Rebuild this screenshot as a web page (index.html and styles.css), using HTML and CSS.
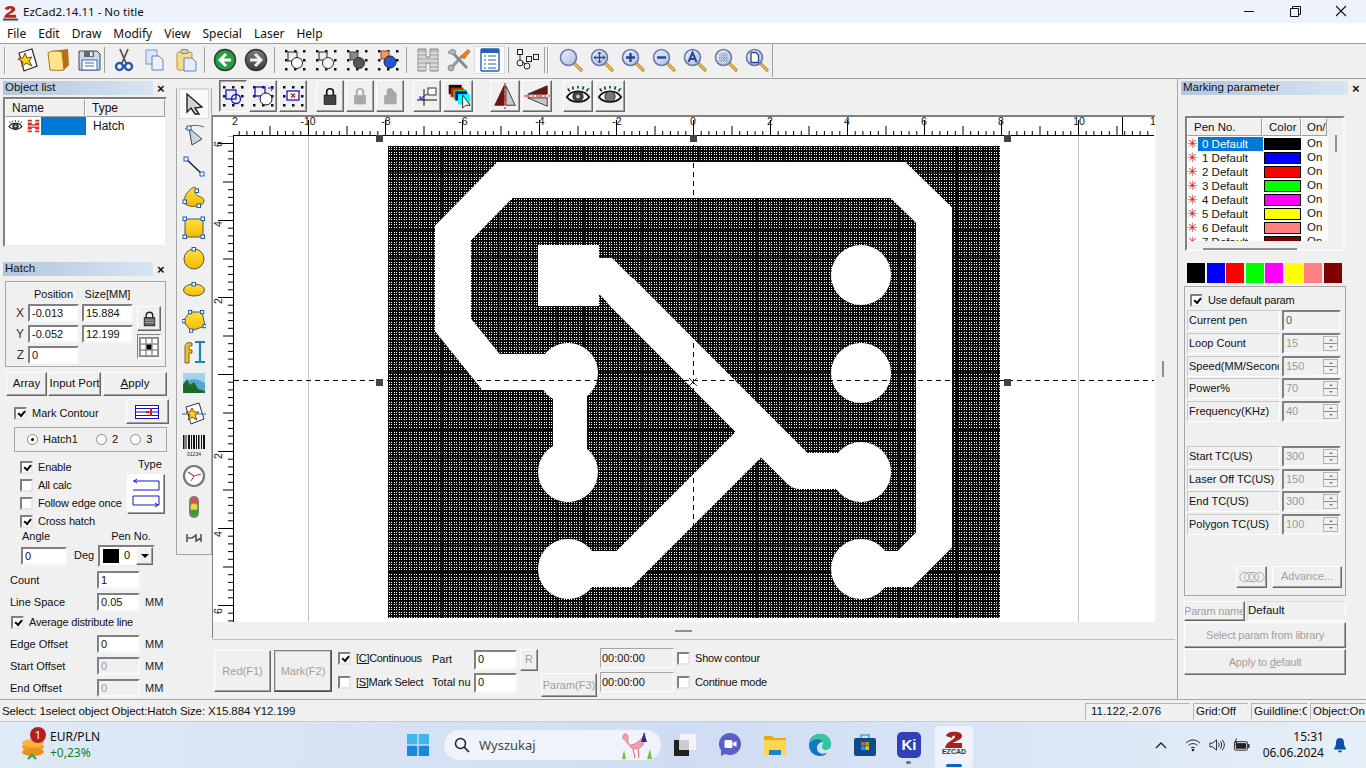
FILE: index.html
```html
<!DOCTYPE html>
<html lang="en">
<head>
<meta charset="utf-8">
<title>EzCad2.14.11 - No title</title>
<link rel="stylesheet" href="styles.css">
</head>
<body>
<svg class="defs" width="0" height="0" aria-hidden="true">
<defs>
<linearGradient id="yel" x1="0" y1="0" x2="0" y2="1"><stop offset="0" stop-color="#ffe23a"/><stop offset="1" stop-color="#f5b800"/></linearGradient>
<linearGradient id="glass" x1="0" y1="0" x2="1" y2="1"><stop offset="0" stop-color="#eef3fb"/><stop offset="1" stop-color="#a9bde0"/></linearGradient>
<linearGradient id="btnbg" x1="0" y1="0" x2="0" y2="1"><stop offset="0" stop-color="#7c7c7c"/><stop offset="1" stop-color="#3c3c3c"/></linearGradient>
<symbol id="mag" viewBox="0 0 24 24"><path d="M14.500 14.500L22 22" stroke="#b98d2a" stroke-width="3.200" stroke-linecap="round"/><path d="M14.500 14.500L22 22" stroke="#f2c85a" stroke-width="1.200" stroke-linecap="round"/><circle cx="9.500" cy="9.500" r="8" fill="url(#glass)" stroke="#6a7aa8" stroke-width="1.600"/></symbol>
<symbol id="dots" viewBox="0 0 24 24"><g fill="#111"><rect x="2" y="2" width="2.500" height="2.500"/><rect x="11" y="2" width="2.500" height="2.500"/><rect x="20" y="2" width="2.500" height="2.500"/><rect x="2" y="11" width="2.500" height="2.500"/><rect x="20" y="11" width="2.500" height="2.500"/><rect x="2" y="20" width="2.500" height="2.500"/><rect x="11" y="20" width="2.500" height="2.500"/><rect x="20" y="20" width="2.500" height="2.500"/></g></symbol>
<symbol id="eye" viewBox="0 0 28 22"><path d="M2 12C7 4 21 4 26 12C21 19 7 19 2 12Z" fill="#fff" stroke="#111" stroke-width="2"/><circle cx="14" cy="11.500" r="5.500" fill="#444" stroke="#111"/><circle cx="14" cy="11.500" r="2" fill="#ccc"/><path d="M5 6L3 3M9 4L8 1M14 3V0M19 4L20 1M23 6L25 3" stroke="#111" stroke-width="1.500"/><path d="M3 3h2M8 1h2M18 1h3M24 3h3" stroke="#3aa" stroke-width="1"/></symbol>
</defs>
</svg>

<header class="titlebar">
  <div class="title-left">
    <svg class="app-ico" viewBox="0 0 18 18"><path d="M3 6C3 2 14 1 14 6C14 9 9 10 7 12H15V15H2C3 10 10 9 10 6C10 5 7 5 7 7Z" fill="#b3271e"/><rect x="1" y="16" width="16" height="2" fill="#444"/></svg>
    <span>EzCad2.14.11 - No title</span>
  </div>
  <div class="winctl">
    <svg width="46" height="23" viewBox="0 0 46 23"><path d="M18 11.500H28" stroke="#111"/></svg>
    <svg width="46" height="23" viewBox="0 0 46 23"><path d="M20.500 8.500V6.500H28.500V14.500H26.500M18.500 8.500H26.500V16.500H18.500Z" fill="none" stroke="#111"/></svg>
    <svg width="46" height="23" viewBox="0 0 46 23"><path d="M18 6L28 16M28 6L18 16" stroke="#111" stroke-width="1.100"/></svg>
  </div>
</header>

<nav class="menubar">
  <span>File</span><span>Edit</span><span>Draw</span><span>Modify</span><span>View</span><span>Special</span><span>Laser</span><span>Help</span>
</nav>

<div class="toolbar">
  <i class="grip"></i>
  <div class="tool t1">
    <svg viewBox="0 0 24 24"><path d="M4 5L17 1L22 18L9 23Z" fill="#fff" stroke="#333" stroke-width="1.300"/><path d="M10 5L12 10L17 9L14 13L17 18L11 15L7 19L8 14L3 11L8 10Z" fill="#ffd21e" stroke="#7a4a00" stroke-width="1"/></svg>
  </div>
  <div class="tool">
    <svg viewBox="0 0 24 24"><path d="M6 3L22 1L23 17L18 22Z" fill="#b86c1c"/><path d="M2 5C6 2 12 3 16 4L18 22C13 23 8 22 4 22Z" fill="#ffe48a" stroke="#a57818"/></svg>
  </div>
  <div class="tool">
    <svg viewBox="0 0 24 24"><path d="M2 3H20L23 6V22H2Z" fill="#cfd8e6" stroke="#445"/><rect x="7" y="3" width="10" height="6" fill="#667"/><rect x="13" y="4" width="2.500" height="4" fill="#eee"/><rect x="5" y="12" width="15" height="10" fill="#fff" stroke="#3468b8"/><path d="M8 15H17M8 18H17" stroke="#3468b8"/></svg>
  </div>
  <i class="sep s1"></i>
  <div class="tool">
    <svg viewBox="0 0 24 24"><path d="M8 1L14 15M16 1L10 15" stroke="#555" stroke-width="1.800"/><circle cx="7.500" cy="18.500" r="3.500" fill="#fff" stroke="#2558b0" stroke-width="2.400"/><circle cx="16.500" cy="18.500" r="3.500" fill="#fff" stroke="#2558b0" stroke-width="2.400"/></svg>
  </div>
  <div class="tool">
    <svg viewBox="0 0 24 24"><rect x="3" y="2" width="11" height="14" fill="#dbe6f6" stroke="#7d9ccb"/><path d="M9 8H16L20 12V22H9Z" fill="#eaf1fb" stroke="#5e84bd"/></svg>
  </div>
  <div class="tool">
    <svg viewBox="0 0 24 24"><rect x="3" y="4" width="15" height="18" rx="2" fill="#f6dc8a" stroke="#b8973c"/><rect x="7" y="1.500" width="7" height="4" rx="1" fill="#ccc" stroke="#888"/><path d="M10 10H18L22 14V23H10Z" fill="#e5eefa" stroke="#5e84bd"/></svg>
  </div>
  <i class="sep s2"></i>
  <div class="tool t2">
    <svg viewBox="0 0 24 24"><circle cx="12" cy="12" r="10.500" fill="#23a03e" stroke="#333" stroke-width="1.400"/><path d="M13 6L7 12L13 18M7.500 12H18" fill="none" stroke="#fff" stroke-width="3"/></svg>
  </div>
  <div class="tool">
    <svg viewBox="0 0 24 24"><circle cx="12" cy="12" r="10.500" fill="url(#btnbg)" stroke="#333" stroke-width="1.400"/><path d="M11 6L17 12L11 18M16.500 12H6" fill="none" stroke="#eee" stroke-width="3"/></svg>
  </div>
  <i class="sep s3"></i>
  <div class="tool"><svg viewBox="0 0 24 24"><use href="#dots"/><rect x="5" y="4" width="9" height="9" fill="none" stroke="#222"/><circle cx="14" cy="15" r="5.500" fill="#fff" stroke="#222"/></svg></div>
  <div class="tool"><svg viewBox="0 0 24 24"><use href="#dots"/><rect x="5" y="4" width="8" height="8" fill="#eee" stroke="#222"/><circle cx="14" cy="15" r="5.500" fill="#f4f4f4" stroke="#333"/></svg></div>
  <div class="tool"><svg viewBox="0 0 24 24"><use href="#dots"/><rect x="5" y="4" width="8" height="8" fill="#888" stroke="#444"/><circle cx="14" cy="15" r="5.500" fill="#555" stroke="#333"/></svg></div>
  <div class="tool"><svg viewBox="0 0 24 24"><use href="#dots"/><rect x="5" y="3" width="8" height="8" fill="#f09a5a" stroke="#a33"/><circle cx="14" cy="14" r="6" fill="#2457cf" stroke="#123"/></svg></div>
  <i class="sep s4"></i>
  <div class="tool"><svg viewBox="0 0 24 24"><path d="M2 1H10V9H14V1H22V23H14V15H10V23H2Z" fill="#bdbdbd" stroke="#8a8a8a"/><path d="M2 5H10M2 9H10M2 13H22M2 17H10M14 17H22M14 5H22M14 9H22M2 21H10M14 21H22" stroke="#efefef"/></svg></div>
  <div class="tool"><svg viewBox="0 0 24 24"><path d="M5 19L15 8" stroke="#9a9a9a" stroke-width="3.200"/><path d="M6 5L20 20" stroke="#8a8a8a" stroke-width="3"/><path d="M1 5C2 1 8 0 9 4L7 7L3 5.500Z" fill="#b4b4b4" stroke="#666" stroke-width=".6"/><circle cx="4" cy="20" r="3" fill="#b4b4b4" stroke="#666" stroke-width=".6"/><path d="M14 8L21 1.500L23 3.500L17 11Z" fill="#f08020" stroke="#b05010" stroke-width=".7"/></svg></div>
  <div class="tool pressed"><svg viewBox="0 0 24 24"><rect x="3" y="1" width="18" height="22" rx="1" fill="#fff" stroke="#2660b8" stroke-width="1.400"/><rect x="3" y="1" width="18" height="4" fill="#2660b8"/><path d="M6 8H8M10 8H18M6 12H8M10 12H18M6 16H8M10 16H18M6 20H8M10 20H18" stroke="#2660b8" stroke-width="1.200"/></svg></div>
  <i class="sep s5"></i>
  <div class="tool"><svg viewBox="0 0 24 24"><g fill="none" stroke="#222"><rect x="1.500" y="1.500" width="5" height="5"/><rect x="10.500" y="8.500" width="5" height="5"/><rect x="17.500" y="6.500" width="5" height="5"/><circle cx="4" cy="15" r="3"/><circle cx="11" cy="18" r="3"/><path d="M4 7V12M6 14L10 16"/></g></svg></div>
  <i class="sep s6"></i><i class="grip g2"></i>
  <div class="tool z"><svg viewBox="0 0 24 24"><use href="#mag"/></svg></div>
  <div class="tool z"><svg viewBox="0 0 24 24"><use href="#mag"/><path d="M9.500 4V15M4 9.500H15" stroke="#24459a" stroke-width="1.300"/><path d="M7.500 6L9.500 4L11.500 6M7.500 13L9.500 15L11.500 13M6 7.500L4 9.500L6 11.500M13 7.500L15 9.500L13 11.500" fill="none" stroke="#24459a"/></svg></div>
  <div class="tool z"><svg viewBox="0 0 24 24"><use href="#mag"/><path d="M9.500 5V14M5 9.500H14" stroke="#24459a" stroke-width="2.400"/></svg></div>
  <div class="tool z"><svg viewBox="0 0 24 24"><use href="#mag"/><path d="M5 9.500H14" stroke="#24459a" stroke-width="2.400"/></svg></div>
  <div class="tool z"><svg viewBox="0 0 24 24"><use href="#mag"/><path d="M5.500 14L9.500 4.500L13.500 14M7 11H12" fill="none" stroke="#24459a" stroke-width="2"/></svg></div>
  <div class="tool z"><svg viewBox="0 0 24 24"><use href="#mag"/><path d="M5 7H14M5 9.500H14M5 12H14M7 5V14M9.500 5V14M12 5V14" stroke="#6d7fb0" stroke-dasharray="1 1.500"/></svg></div>
  <div class="tool z"><svg viewBox="0 0 24 24"><use href="#mag"/><path d="M6 4.500H11L13.500 7V14.500H6Z" fill="#fff" stroke="#24459a" stroke-width="1.300"/></svg></div>
  <i class="sep s7"></i>
</div>

<main class="main">
  <aside class="left">
    <div class="capline"><div class="cap">Object list</div><b class="x">×</b></div>
    <div class="objlist">
      <div class="obj-head"><span class="oh1">Name</span><span class="oh2">Type</span></div>
      <div class="obj-row">
        <svg class="r-eye" viewBox="0 0 28 22"><use href="#eye"/></svg>
        <svg class="r-h" viewBox="0 0 13 14"><rect width="13" height="14" fill="#fff"/><path d="M1 1H4.500V5.500H8.500V1H12V13H8.500V8.500H4.500V13H1Z" fill="#e03030" stroke="#a02020" stroke-width=".5"/><path d="M0 3H5M8 3H13M0 7H13M0 11H5M8 11H13" stroke="#fff"/></svg>
        <span class="r-sel"></span><span class="r-type">Hatch</span>
      </div>
    </div>

    <div class="capline hatchcap"><div class="cap">Hatch</div><b class="x">×</b></div>
    <div class="posbox">
      <span class="lb-pos">Position</span><span class="lb-size">Size[MM]</span>
      <span class="axis">X</span><div class="in">-0.013</div><div class="in">15.884</div>
      <div class="lockcol">
        <div class="bt lockbtn"><svg viewBox="0 0 16 20"><path d="M4 9V6C4 1 12 1 12 6V9" fill="none" stroke="#222" stroke-width="1.700"/><rect x="1.500" y="9" width="13" height="10" fill="#666" stroke="#111"/><path d="M2 12H14M2 15H14" stroke="#aaa"/></svg></div>
        <div class="bt gridbtn"><svg viewBox="0 0 22 22"><rect width="22" height="22" fill="#888"/><g fill="#fff"><rect x="2" y="2" width="5" height="5"/><rect x="8.500" y="2" width="5" height="5"/><rect x="15" y="2" width="5" height="5"/><rect x="2" y="8.500" width="5" height="5"/><rect x="15" y="8.500" width="5" height="5"/><rect x="2" y="15" width="5" height="5"/><rect x="8.500" y="15" width="5" height="5"/><rect x="15" y="15" width="5" height="5"/></g><rect x="8.500" y="8.500" width="5" height="5" fill="#000"/></svg></div>
      </div>
      <span class="axis">Y</span><div class="in">-0.052</div><div class="in">12.199</div>
      <span class="axis">Z</span><div class="in">0</div>
    </div>

    <div class="btnrow">
      <div class="bt b-array">Array</div><div class="bt b-port">Input Port</div><div class="bt b-apply"><span><u>A</u>pply</span></div>
    </div>

    <div class="contour">
      <span class="ck on"></span><span class="cl">Mark Contour</span>
      <div class="bt b-ct"><svg viewBox="0 0 24 14"><rect x=".5" y=".5" width="23" height="13" fill="#fff" stroke="#1212c8"/><path d="M0 3.500H24M0 7H24M0 10.500H24" stroke="#1212c8"/><path d="M11 7H14M16 3V11" stroke="#e01010" stroke-width="2"/></svg></div>
    </div>

    <div class="radios">
      <span class="rd on"></span><span class="rl rl1">Hatch1</span>
      <span class="rd"></span><span class="rl rl2">2</span>
      <span class="rd"></span><span class="rl">3</span>
    </div>

    <div class="hatchopts">
      <div class="optcol">
        <div class="chkrow"><span class="ck on"></span><span>Enable</span></div>
        <div class="chkrow"><span class="ck"></span><span>All calc</span></div>
        <div class="chkrow"><span class="ck"></span><span>Follow edge once</span></div>
        <div class="chkrow"><span class="ck on"></span><span>Cross hatch</span></div>
      </div>
      <div class="typecol">
        <span class="typel">Type</span>
        <div class="bt b-type"><svg viewBox="0 0 30 34"><path d="M2 4H28V13H2M2 19H28V28H2V19" fill="none" stroke="#1414d0"/><path d="M6 2L3 4L6 6M24 26L27 28L24 30" fill="none" stroke="#1414d0"/></svg></div>
      </div>
    </div>

    <div class="anglelabels"><span>Angle</span><span>Pen No.</span></div>
    <div class="anglerow">
      <div class="in in-angle">0</div><span class="deg">Deg</span>
      <div class="combo"><i class="pensw"></i><span>0</span><div class="bt ddarrow"><svg viewBox="0 0 8 4"><path d="M0 0H8L4 4Z"/></svg></div></div>
    </div>
    <div class="fr"><span class="fl">Count</span><div class="in in-f">1</div></div>
    <div class="fr"><span class="fl">Line Space</span><div class="in in-f">0.05</div><span class="mm">MM</span></div>
    <div class="avg"><span class="ck on"></span><span>Average distribute line</span></div>
    <div class="fr"><span class="fl">Edge Offset</span><div class="in in-f">0</div><span class="mm">MM</span></div>
    <div class="fr"><span class="fl">Start Offset</span><div class="in in-f dis">0</div><span class="mm">MM</span></div>
    <div class="fr"><span class="fl">End Offset</span><div class="in in-f dis">0</div><span class="mm">MM</span></div>
  </aside>

  <div class="vtool">
    <div class="vt active"><svg viewBox="0 0 24 24"><path d="M5 2L20 15L13 16L17 22H13L9 16L5 20Z" fill="#cfd4dc" stroke="#222" stroke-width="1.400"/></svg></div>
    <div class="vt"><svg viewBox="0 0 24 24"><path d="M3 6C8 1 16 2 22 4" fill="none" stroke="#666"/><path d="M7 5L20 16L10 22Z" fill="#cdd2e0" stroke="#444"/><rect x="5" y="3" width="4" height="4" fill="#fff" stroke="#1e5ac8"/></svg></div>
    <div class="vt"><svg viewBox="0 0 24 24"><path d="M4 5L20 20" stroke="#111" stroke-width="1.300"/><rect x="2" y="3" width="4" height="4" fill="#fff" stroke="#1e5ac8"/><rect x="18" y="18" width="4" height="4" fill="#fff" stroke="#1e5ac8"/></svg></div>
    <div class="vt"><svg viewBox="0 0 24 24"><path d="M12 2C4 6 0 16 3 19C8 23 22 22 22 16C22 11 15 12 14 9C13 6 16 3 12 2Z" fill="url(#yel)" stroke="#7a5a20"/><rect x="13" y="4" width="3.500" height="3.500" fill="#fff" stroke="#1e5ac8"/><rect x="1" y="15" width="3.500" height="3.500" fill="#fff" stroke="#1e5ac8"/><rect x="15" y="19" width="3.500" height="3.500" fill="#fff" stroke="#1e5ac8"/></svg></div>
    <div class="vt"><svg viewBox="0 0 24 24"><rect x="3" y="3" width="18" height="18" fill="url(#yel)" stroke="#555"/><g fill="#fff" stroke="#1e5ac8"><rect x="1" y="1" width="3.500" height="3.500"/><rect x="19" y="1" width="3.500" height="3.500"/><rect x="1" y="19" width="3.500" height="3.500"/><rect x="19" y="19" width="3.500" height="3.500"/></g></svg></div>
    <div class="vt"><svg viewBox="0 0 24 24"><circle cx="12" cy="12" r="10" fill="url(#yel)" stroke="#555"/><rect x="10" y="0.500" width="3.500" height="3.500" fill="#fff" stroke="#1e5ac8"/></svg></div>
    <div class="vt"><svg viewBox="0 0 24 24"><ellipse cx="12" cy="12" rx="10.500" ry="6" fill="url(#yel)" stroke="#555"/><rect x="10" y="4.500" width="3.500" height="3.500" fill="#fff" stroke="#1e5ac8"/></svg></div>
    <div class="vt"><svg viewBox="0 0 24 24"><path d="M8 3L20 3L23 17L9 22L1 12Z" fill="url(#yel)" stroke="#555"/><g fill="#fff" stroke="#1e5ac8"><rect x="6.500" y="1.500" width="3.200" height="3.200"/><rect x="18.500" y="1.500" width="3.200" height="3.200"/><rect x="21" y="15.500" width="3.200" height="3.200"/><rect x="7.500" y="20" width="3.200" height="3.200"/><rect x="0" y="10.500" width="3.200" height="3.200"/></g></svg></div>
    <div class="vt"><svg viewBox="0 0 24 24"><path d="M3 23V7C3 3 6 2 10 3V6C8 5.500 7 6 7 8V10H10V13H7V23Z" fill="#f3c020" stroke="#333" stroke-width=".7"/><path d="M13 2H23M18 2V22M13 22H23" fill="none" stroke="#1c86b8" stroke-width="2.200"/></svg></div>
    <div class="vt"><svg viewBox="0 0 24 24"><rect x="1" y="2" width="22" height="20" fill="#9fd6ee"/><path d="M1 12C8 6 16 8 23 12V22H1Z" fill="#58a6d0"/><path d="M1 22V14L5 8L8 14L12 11L16 18L23 20V22Z" fill="#1f6a28"/></svg></div>
    <div class="vt"><svg viewBox="0 0 24 24"><path d="M4 5L17 1L22 17L9 22Z" fill="#fff" stroke="#333"/><path d="M0 12H24" stroke="#1e5ac8"/><path d="M10 6L12 10L17 10L13 13L15 18L10 15L6 18L8 13L4 10L8 10Z" fill="#ffd21e" stroke="#7a4a00"/></svg></div>
    <div class="vt"><svg viewBox="0 0 24 24"><g fill="#111"><rect x="1" y="2" width="1.500" height="14"/><rect x="3.500" y="2" width="1" height="14"/><rect x="6" y="2" width="2" height="14"/><rect x="9" y="2" width="1" height="14"/><rect x="11" y="2" width="2" height="14"/><rect x="14" y="2" width="1" height="14"/><rect x="16" y="2" width="1.500" height="14"/><rect x="19" y="2" width="1" height="14"/><rect x="21" y="2" width="2" height="14"/></g><text x="12" y="23" class="bcode">01234</text></svg></div>
    <div class="vt"><svg viewBox="0 0 24 24"><circle cx="12" cy="12" r="10" fill="#fff" stroke="#777" stroke-width="2.200"/><path d="M12 12L6 8M12 12L19 10M12 12L9 17" stroke="#c33"/><path d="M12 12L6 8" stroke="#555"/></svg></div>
    <div class="vt"><svg viewBox="0 0 24 24"><rect x="7" y="1" width="10" height="22" rx="5" fill="#6a8a6a"/><circle cx="12" cy="6" r="3.500" fill="#d8505a"/><circle cx="12" cy="12" r="3.500" fill="#e8d840"/><circle cx="12" cy="18" r="3.500" fill="#3e9a3e"/></svg></div>
    <div class="vt"><svg viewBox="0 0 24 24"><path d="M5 8V16M19 8V16M5 12H10L14 9V15L19 12" fill="none" stroke="#555" stroke-width="1.600"/></svg></div>
  </div>

  <section class="center">
    <div class="tb2">
      <div class="bt b2 pressed2"><svg viewBox="0 0 24 24"><use href="#dots"/><rect x="5" y="6" width="10" height="9" fill="none" stroke="#1414d0" stroke-width="1.300"/><circle cx="15" cy="15" r="4.500" fill="none" stroke="#1414d0" stroke-width="1.300"/></svg></div>
      <div class="bt b2"><svg viewBox="0 0 24 24"><use href="#dots"/><rect x="4" y="3" width="10" height="9" fill="none" stroke="#1414d0" stroke-width="1.300"/><circle cx="15" cy="15" r="6" fill="#fff" stroke="#111"/><path d="M17 4H22L20 7" fill="none" stroke="#1414d0"/></svg></div>
      <div class="bt b2"><svg viewBox="0 0 24 24"><use href="#dots"/><rect x="6" y="7" width="12" height="9" fill="#fff" stroke="#1414d0" stroke-width="1.300"/><path d="M10 9.500L14 13.500M14 9.500L10 13.500" stroke="#e01010" stroke-width="1.200"/></svg></div>
      <i class="b2gap g7"></i>
      <div class="bt b2"><svg class="lk" viewBox="0 0 24 24"><path d="M8 12V7C8 2 16 2 16 7V12" fill="none" stroke="#111" stroke-width="2"/><rect x="5" y="11" width="14" height="11" fill="#444" stroke="#111"/></svg></div>
      <div class="bt b2"><svg class="lk" viewBox="0 0 24 24"><path d="M8 12V7C8 2 16 2 16 7V12" fill="none" stroke="#a8a8a8" stroke-width="2"/><rect x="5" y="11" width="14" height="11" fill="#a8a8a8"/></svg></div>
      <div class="bt b2"><svg class="lk" viewBox="0 0 24 24"><path d="M8 11V7C8 2 14 1 16 5L20 9V22H5V11Z" fill="#a8a8a8"/></svg></div>
      <i class="b2gap g7"></i>
      <div class="bt b2"><svg viewBox="0 0 24 24"><rect x="13" y="4" width="8" height="7" fill="#fff" stroke="#333"/><path d="M2 16H22M9 5V22" stroke="#111"/><path d="M12 10L5 15M5 12V15H9" fill="none" stroke="#1414d0"/></svg></div>
      <div class="bt b2 w30"><svg viewBox="0 0 28 28"><rect x="4" y="2" width="14" height="10" fill="#111"/><rect x="6" y="5" width="14" height="10" fill="#e01010"/><rect x="9" y="7" width="14" height="10" fill="#10d020"/><rect x="11" y="9" width="13" height="10" fill="#1010c0"/><rect x="14" y="12" width="13" height="11" fill="#00ffff"/><path d="M19 13V27L22 24H27Z" fill="#fff" stroke="#222"/></svg></div>
      <i class="b2gap g15"></i>
      <div class="bt b2 w30"><svg viewBox="0 0 28 28"><path d="M13 3L3 24H13Z" fill="#7a0d0d" stroke="#333"/><path d="M15 3L25 24H15Z" fill="#c8c8c8" stroke="#333"/><path d="M14 0V28" stroke="#e01010" stroke-width="1.300" stroke-dasharray="7 2 2 2"/></svg></div>
      <div class="bt b2 w30"><svg viewBox="0 0 28 28"><path d="M25 3L4 12H25Z" fill="#7a0d0d" stroke="#333"/><path d="M25 25L4 16H25Z" fill="#c8c8c8" stroke="#333"/><path d="M0 14H28" stroke="#e01010" stroke-width="1.300" stroke-dasharray="7 2 2 2"/></svg></div>
      <i class="b2gap g9"></i>
      <div class="bt b2 w30"><svg viewBox="0 0 28 22"><use href="#eye"/></svg></div>
      <div class="bt b2 w30"><svg viewBox="0 0 28 22"><use href="#eye"/><circle cx="14" cy="11.500" r="5" fill="#777"/></svg></div>
    </div>

    <div class="canvas">
      <svg class="draw" viewBox="212 115 943 507" width="943" height="507">
        <defs>
          <pattern id="hdots" width="5" height="5" patternUnits="userSpaceOnUse" x="388" y="146">
            <rect width="5" height="5" fill="#0c0c0c"/>
            <g fill="#fff"><rect x="1" y="1" width="1" height="1"/><rect x="3" y="1" width="1" height="1"/><rect x="1" y="3" width="1" height="1"/><rect x="3" y="3" width="1" height="1"/></g>
          </pattern>
          <pattern id="hbars" width="28.600" height="28.600" patternUnits="userSpaceOnUse" x="384" y="143">
            <path d="M0 0H29M0 0V29" stroke="#000" stroke-width="2"/>
          </pattern>
          <pattern id="rtop" width="77" height="20" patternUnits="userSpaceOnUse" x="231" y="116">
            <path d="M.5 4V20M8.200 15V20M15.900 15V20M23.600 15V20M31.300 15V20M39 10V20M46.700 15V20M54.400 15V20M62.100 15V20M69.800 15V20" stroke="#000" stroke-width="1" fill="none"/>
          </pattern>
          <pattern id="rleft" width="21" height="77" patternUnits="userSpaceOnUse" x="212" y="143">
            <path d="M6 .5H21M16 8.200H21M16 15.900H21M16 23.600H21M16 31.300H21M11 39H21M16 46.700H21M16 54.400H21M16 62.100H21M16 69.800H21" stroke="#000" stroke-width="1" fill="none"/>
          </pattern>
        </defs>
        <rect x="212" y="115" width="943" height="507" fill="#fff"/>
        <path d="M308.500 136V622M1078.500 136V622" stroke="#c4c4c4"/>
        <rect x="233" y="116" width="922" height="20" fill="url(#rtop)"/>
        <rect x="212" y="136" width="21" height="486" fill="url(#rleft)"/>
        <path d="M233 135.500H1154M233.500 135V622" stroke="#000" shape-rendering="crispEdges"/>
        <path d="M1122.500 116V135" stroke="#000"/>
        <g class="rt">
          <text x="235" y="125">2</text><text x="308" y="125">-10</text><text x="386" y="125">-8</text><text x="463" y="125">-6</text><text x="540" y="125">-4</text><text x="617" y="125">-2</text><text x="693" y="125">0</text><text x="770" y="125">2</text><text x="847" y="125">4</text><text x="924" y="125">6</text><text x="1001" y="125">8</text><text x="1079" y="125">10</text><text x="1153" y="125">1</text>
        </g>
        <g class="rt">
          <text transform="translate(222 144) rotate(-90)">6</text><text transform="translate(222 224) rotate(-90)">4</text><text transform="translate(222 301) rotate(-90)">2</text><text transform="translate(222 456) rotate(-90)">2</text><text transform="translate(222 534) rotate(-90)">4</text><text transform="translate(222 611) rotate(-90)">6</text>
        </g>

        <rect x="388" y="146" width="612" height="472" fill="url(#hdots)" shape-rendering="crispEdges"/>
        <rect x="388" y="146" width="612" height="472" fill="url(#hbars)"/>

        <g fill="none" stroke="#fff" stroke-width="36" stroke-linejoin="miter">
          <path d="M861 569H905L934 540V215L898 180H505L453 233V325L491 372H568"/>
          <path d="M570 373V472" stroke-width="34"/>
          <path d="M620 290.500L800 471H861" stroke-linejoin="round"/>
          <path d="M568 569H624L760 433"/>
        </g>
        <g fill="#fff">
          <circle cx="568" cy="373" r="30"/><circle cx="568" cy="472" r="30"/><circle cx="568" cy="569" r="30"/>
          <circle cx="861" cy="275" r="30"/><circle cx="861" cy="373" r="30"/><circle cx="861" cy="472" r="30"/><circle cx="861" cy="569" r="30"/>
          <rect x="538" y="245" width="61" height="61"/>
          <path d="M599 258H612L640 286V335L599 294Z"/>
        </g>

        <path d="M234 380.500H1154M693.500 136V622" stroke="#000" stroke-dasharray="5 4" shape-rendering="crispEdges"/>
        <g fill="#444">
          <rect x="376" y="135" width="7" height="7"/><rect x="690" y="135" width="7" height="7"/><rect x="1004" y="135" width="7" height="7"/>
          <rect x="376" y="379" width="7" height="7"/><rect x="1004" y="379" width="7" height="7"/>
        </g>
        <path d="M689 378L697 386M697 378L689 386" stroke="#333"/>
      </svg>
      <div class="vhandle"></div>
    </div>
    <div class="hstrip"><div class="hhandle"></div></div>

    <div class="controls">
      <div class="bt c-red dis-t">Red(F1)</div>
      <div class="bt c-mark dis-t">Mark(F2)</div>
      <div class="c-checks">
        <div class="chkrow"><span class="ck on"></span><span><u>[C]</u>Continuous</span></div>
        <div class="chkrow"><span class="ck"></span><span><u>[S]</u>Mark Select</span></div>
      </div>
      <div class="c-part">
        <div class="prow"><span class="pl">Part</span><div class="in in-p">0</div><div class="bt b-r dis-t">R</div></div>
        <div class="prow"><span class="pl">Total nu</span><div class="in in-p">0</div></div>
      </div>
      <div class="bt b-param dis-t">Param(F3)</div>
      <div class="c-times"><div class="timebox">00:00:00</div><div class="timebox">00:00:00</div></div>
      <div class="c-checks c2">
        <div class="chkrow"><span class="ck"></span><span>Show contour</span></div>
        <div class="chkrow"><span class="ck"></span><span>Continue mode</span></div>
      </div>
    </div>
  </section>

  <aside class="right">
    <div class="capline"><div class="cap capr">Marking parameter</div><b class="x">×</b></div>
    <div class="penlist">
      <div class="pen-head"><span class="ph1">Pen No.</span><span class="ph2">Color</span><span class="ph3">On/</span></div>
      <div class="pen-rows">
        <div class="pen"><i class="star">✳</i><span class="pn sel">0 Default</span><i class="sw"></i><span>On</span></div>
        <div class="pen"><i class="star">✳</i><span class="pn">1 Default</span><i class="sw s-blue"></i><span>On</span></div>
        <div class="pen"><i class="star">✳</i><span class="pn">2 Default</span><i class="sw s-red"></i><span>On</span></div>
        <div class="pen"><i class="star">✳</i><span class="pn">3 Default</span><i class="sw s-green"></i><span>On</span></div>
        <div class="pen"><i class="star">✳</i><span class="pn">4 Default</span><i class="sw s-mag"></i><span>On</span></div>
        <div class="pen"><i class="star">✳</i><span class="pn">5 Default</span><i class="sw s-yel"></i><span>On</span></div>
        <div class="pen"><i class="star">✳</i><span class="pn">6 Default</span><i class="sw s-sal"></i><span>On</span></div>
        <div class="pen"><i class="star">✳</i><span class="pn">7 Default</span><i class="sw s-mar"></i><span>On</span></div>
      </div>
      <i class="vthumb"></i>
      <i class="hthumb"></i>
    </div>
    <div class="palette"><i></i><i class="s-blue"></i><i class="s-red"></i><i class="s-green"></i><i class="s-mag"></i><i class="s-yel"></i><i class="s-sal"></i><i class="s-mar"></i></div>
    <div class="parambox">
      <div class="usedef"><span class="ck on"></span><span>Use default param</span></div>
      <div class="pr"><span class="plab">Current pen</span><div class="in pv">0</div></div>
      <div class="pr"><span class="plab">Loop Count</span><div class="in pv">15<i class="spin"></i></div></div>
      <div class="pr"><span class="plab">Speed(MM/Second)</span><div class="in pv">150<i class="spin"></i></div></div>
      <div class="pr"><span class="plab">Power%</span><div class="in pv">70<i class="spin"></i></div></div>
      <div class="pr"><span class="plab">Frequency(KHz)</span><div class="in pv">40<i class="spin"></i></div></div>
      <div class="prgap"></div>
      <div class="pr"><span class="plab">Start TC(US)</span><div class="in pv">300<i class="spin"></i></div></div>
      <div class="pr"><span class="plab">Laser Off TC(US)</span><div class="in pv">150<i class="spin"></i></div></div>
      <div class="pr"><span class="plab">End TC(US)</span><div class="in pv">300<i class="spin"></i></div></div>
      <div class="pr"><span class="plab">Polygon TC(US)</span><div class="in pv">100<i class="spin"></i></div></div>
      <div class="advrow">
        <div class="bt b-rings"><svg viewBox="0 0 30 12"><g fill="none" stroke="#a8a8a8"><circle cx="7" cy="6" r="5"/><circle cx="12" cy="6" r="5"/><circle cx="17" cy="6" r="5"/><circle cx="23" cy="6" r="5"/></g></svg></div>
        <div class="bt b-adv dis-t">Advance...</div>
      </div>
    </div>
    <div class="namerow"><div class="bt b-name dis-t">Param name</div><div class="nameval">Default</div></div>
    <div class="bt b-wide dis-t">Select param from library</div>
    <div class="bt b-wide dis-t"><span>Apply to <u>d</u>efault</span></div>
  </aside>
</main>

<footer class="status">
  <span class="st-msg">Select: 1select object Object:Hatch Size: X15.884 Y12.199</span>
  <span class="st st1">11.122,-2.076</span>
  <span class="st st2">Grid:Off</span>
  <span class="st st3">Guildline:On</span>
  <span class="st st4">Object:On</span>
</footer>

<div class="taskbar">
  <div class="tb-widget">
    <div class="coin">
      <svg viewBox="0 0 30 30" width="30" height="30"><ellipse cx="14" cy="17" rx="11" ry="4" fill="#f0a02a"/><ellipse cx="14" cy="13" rx="11" ry="4" fill="#f7b53c"/><ellipse cx="14" cy="22" rx="11" ry="4" fill="#e8901e"/><path d="M9 29L13 25L17 29" fill="none" stroke="#3fa23f" stroke-width="2.400"/></svg>
      <span class="badge">1</span>
    </div>
    <div class="wtext"><span>EUR/PLN</span><span class="wgreen">+0,23%</span></div>
  </div>
  <div class="tb-center">
    <svg class="ti-win" viewBox="0 0 22 22"><rect width="10.300" height="10.300" fill="#40b5ee"/><rect x="11.700" width="10.300" height="10.300" fill="#40b5ee"/><rect y="11.700" width="10.300" height="10.300" fill="#1a87dc"/><rect x="11.700" y="11.700" width="10.300" height="10.300" fill="#1a87dc"/></svg>
    <div class="searchbox">
      <svg viewBox="0 0 16 16" width="16" height="16"><circle cx="6.500" cy="6.500" r="5" fill="none" stroke="#222" stroke-width="1.500"/><path d="M10 10L15 15" stroke="#222" stroke-width="1.700"/></svg>
      <span>Wyszukaj</span>
      <svg class="flamingo" viewBox="0 0 34 30" width="38" height="30"><path d="M4 9C3 3 8 2 9 7C9 11 8 14 12 15C17 14 22 11 26 3L24 15C21 19 15 20 11 17" fill="#ef9fae" stroke="#d66" stroke-width=".7"/><path d="M25 2L28 12L22 12Z" fill="#352a86"/><path d="M14 19L16 28M19 18L20 28" stroke="#d66" stroke-width="1"/><path d="M3 29L5 20L7 29M28 29L31 19L33 29" fill="#7cbf48"/></svg>
    </div>
    <svg class="ti" viewBox="0 0 24 24"><rect x="7" y="1" width="16" height="16" fill="#f4f4f4"/><rect x="6" y="7" width="10" height="10" fill="#ccc"/><path d="M1 7H6V17H16V23H1Z" fill="#222"/></svg>
    <svg class="ti" viewBox="0 0 24 24"><circle cx="12" cy="11" r="11" fill="#5a5fc8"/><path d="M3 17L3 23L9 20Z" fill="#5a5fc8"/><rect x="6.500" y="7" width="8" height="8" rx="1.500" fill="#fff"/><path d="M15 10L18.500 8V14L15 12Z" fill="#fff"/></svg>
    <svg class="ti" viewBox="0 0 24 24"><path d="M1 3H9L11 5H23V22H1Z" fill="#e8a91f"/><rect x="1" y="7" width="22" height="15" fill="#ffd64f"/><rect x="6" y="17" width="12" height="5" fill="#1a86d0"/></svg>
    <svg class="ti" viewBox="0 0 24 24"><path d="M23 13C23 5 18 1 12 1C5 1 1 6 1 12C1 19 6 23 12 23C15 23 18 22 19 20C14 22 9 20 9 15C9 11 13 8 17 9C21 10 23 13 23 13Z" fill="#1477c2"/><path d="M1 11C3 3 10 0 15 1C20 2 24 7 23 13C22 18 14 18 14 14C14 11 16 10 14 8C11 5 4 6 1 11Z" fill="#33c6a0"/></svg>
    <svg class="ti" viewBox="0 0 24 24"><path d="M8 6V2H16V6" fill="none" stroke="#40a8ea" stroke-width="1.600"/><rect x="1" y="5" width="22" height="18" rx="2" fill="#0f4a8c"/><rect x="8" y="9" width="3.700" height="3.700" fill="#f25022"/><rect x="12.300" y="9" width="3.700" height="3.700" fill="#7fba00"/><rect x="8" y="13.300" width="3.700" height="3.700" fill="#00a4ef"/><rect x="12.300" y="13.300" width="3.700" height="3.700" fill="#ffb900"/></svg>
    <div class="ti-ki"><span>Ki</span><i class="dot"></i></div>
    <div class="ti-ez">
      <svg viewBox="0 0 22 18" width="22" height="18"><path d="M3 6C3 1 19 0 19 6C19 10 12 11 10 13H19V18H2C3 11 12 10 12 7C12 5 9 5 9 8Z" fill="#a8221a"/></svg>
      <span>EZCAD</span><i class="activebar"></i>
    </div>
  </div>
  <div class="tb-tray">
    <svg class="tray tr-a" viewBox="0 0 12 8" width="12" height="8"><path d="M1 7L6 2L11 7" fill="none" stroke="#222" stroke-width="1.300"/></svg>
    <svg class="tray tr-b" viewBox="0 0 16 14" width="16" height="14"><path d="M1 5C5 1 11 1 15 5M3.500 7.500C6 5 10 5 12.500 7.500M6 10C7 9 9 9 10 10" fill="none" stroke="#222"/><circle cx="8" cy="12" r="1.300" fill="#222"/></svg>
    <svg class="tray tr-c" viewBox="0 0 17 14" width="16" height="14"><path d="M1 5H4L8 1.500V12.500L4 9H1Z" fill="none" stroke="#222"/><path d="M10 4.500C11 6 11 8 10 9.500M12 3C14 5 14 9 12 11M14 1.500C17 5 17 9 14 12.500" fill="none" stroke="#222"/></svg>
    <svg class="tray tr-d" viewBox="0 0 18 14" width="17" height="14"><rect x="1.500" y="3.500" width="14" height="9" rx="1.500" fill="none" stroke="#222"/><rect x="3" y="5" width="11" height="6" fill="#222"/><rect x="16" y="6" width="1.500" height="4" fill="#222"/><path d="M4 0L2 4H4L3 7" fill="none" stroke="#222"/></svg>
    <div class="clock"><span>15:31</span><span>06.06.2024</span></div>
    <svg class="bell" viewBox="0 0 14 16" width="14" height="16"><path d="M7 1C3.500 1 3 4 3 6C3 9 2 10 1 11.500V12.500H13V11.500C12 10 11 9 11 6C11 4 10.500 1 7 1Z" fill="#0b4fa8"/><path d="M5 13.500H9C9 16 5 16 5 13.500Z" fill="#0b4fa8"/></svg>
  </div>
</div>
</body>
</html>
```
FILE: styles.css
```css
* { box-sizing: border-box; }
html, body { margin: 0; padding: 0; }
body {
  width: 1366px; height: 768px; overflow: hidden;
  display: flex; flex-direction: column;
  background: #f0f0f0; color: #111;
  font: 11px/1 "Liberation Sans", Arial, sans-serif;
}
.defs { position: absolute; }
svg { display: block; }
i { display: block; font-style: normal; }

/* title + menu */
.titlebar { height: 23px; background: #eef2fb; display: flex; justify-content: space-between; align-items: center; font: 11.500px "Noto Sans", sans-serif; flex: none; }
.title-left { display: flex; align-items: center; gap: 4px; padding-left: 2px; }
.app-ico { width: 17px; height: 18px; }
.winctl { display: flex; margin-right: 2px; }
.menubar { height: 20px; background: #fff; display: flex; gap: 12px; align-items: center; padding-left: 7px; font: 12px "Noto Sans", sans-serif; flex: none; }

/* top toolbar */
.toolbar { height: 36px; display: flex; align-items: center; border-top: 1px solid #a0a0a0; border-bottom: 1px solid #a0a0a0; background: #f0f0f0; padding-bottom: 2px; flex: none; }
.grip { width: 2px; height: 27px; margin-left: 4px; border-left: 1px solid #a0a0a0; border-right: 1px solid #fff; margin-right: 4px; }
.tool { width: 31px; height: 28px; display: flex; align-items: center; justify-content: center; flex: none; }
.tool svg { width: 24px; height: 24px; }
.t1 { margin-left: 1px; }
.pressed { background: #fafbfc; border: 1px solid #dcdcdc; }
.sep { width: 1px; height: 26px; background: #a0a0a0; flex: none; }
.s1 { margin: 0 3px 0 0; }
.s2 { margin: 0 4px 0 3px; }
.s3 { margin: 0 4px 0 3px; }
.s4 { margin: 0 5px 0 3px; }
.s5 { margin: 0 3px 0 3px; }
.s6 { margin-left: 1px; }
.g2 { margin-left: 2px; margin-right: 6px; }
.s7 { margin-left: 0; height: 34px; }

/* main */
.main { height: 620px; display: flex; flex: none; }
.left { width: 176px; flex: none; padding-top: 2px; overflow: hidden; }
.capline { height: 14px; display: flex; align-items: center; }
.cap { width: 150px; height: 14px; margin-left: 3px; padding-left: 2px; line-height: 13px; font-size: 11.500px; background: linear-gradient(90deg, #b4c6dc, #d7e4f2); }
.x { font: bold 13px "Liberation Sans", sans-serif; margin-left: 4px; }
.objlist { margin: 2px 0 0 3px; width: 164px; height: 150px; background: #fff; border: 2px solid #808080; border-right-color: #eee; border-bottom-color: #eee; }
.obj-head { height: 18px; display: flex; background: #f0f0f0; line-height: 17px; font-size: 12px; }
.oh1, .oh2, .ph1, .ph2, .ph3 { border: 1px solid; border-color: #fff #a0a0a0 #a0a0a0 #fff; }
.oh1 { width: 80px; padding-left: 6px; }
.oh2 { width: 80px; padding-left: 6px; }
.obj-row { height: 18px; display: flex; align-items: center; }
.r-eye { width: 15px; height: 12px; margin-left: 3px; }
.r-h { width: 13px; height: 14px; margin-left: 4px; }
.r-sel { width: 45px; height: 18px; margin-left: 1px; background: #0078d7; }
.r-type { margin-left: 7px; font-size: 12px; }
.hatchcap { margin-top: 15px; }
.posbox {
  margin: 5px 0 0 5px; width: 161px; height: 86px; border: 1px solid #a6a6a6;
  display: grid; grid-template-columns: 19px 51px 51px 28px; grid-template-rows: 20px 21px 21px 21px; column-gap: 3px; align-items: center;
}
.posbox > .in { height: 18px; line-height: 14px; }
.lb-pos { grid-column: 2; text-align: center; padding-top: 4px; }
.lb-size { grid-column: 3; text-align: center; padding-top: 4px; white-space: nowrap; }
.axis { grid-column: 1; font-size: 12px; text-align: right; padding-right: 1px; color: #333; }
.in { height: 19px; background: #fff; border: 2px solid #808080; border-right-color: #f8f8f8; border-bottom-color: #f8f8f8; padding-left: 2px; line-height: 15px; font-size: 11px; position: relative; }
.lockcol { grid-column: 4; grid-row: 2 / span 3; align-self: start; margin: 4px 0 0 1px; display: flex; flex-direction: column; gap: 3px; }
.bt { background: #f0f0f0; border: 1px solid; border-color: #fff #696969 #696969 #fff; box-shadow: inset -1px -1px #a0a0a0; display: flex; align-items: center; justify-content: center; flex: none; }
.lockbtn { width: 24px; height: 25px; }
.lockbtn svg { width: 13px; height: 17px; }
.gridbtn { width: 24px; height: 25px; border-color: #808080 #fff #fff #808080; box-shadow: none; }
.gridbtn svg { width: 20px; height: 20px; }
.btnrow { display: flex; gap: 1px; margin: 5px 0 0 6px; height: 24px; font-size: 11.500px; }
.b-array { width: 41px; }
.b-port { width: 53px; white-space: nowrap; }
.b-apply { width: 64px; margin-left: 1px; }
.contour { display: flex; align-items: center; height: 25px; margin-top: 3px; padding-left: 14px; }
.contour .ck, .contour .cl { margin-top: 3px; }
.ck { width: 13px; height: 13px; background: #fff; border: 2px solid #808080; border-right-color: #e6e6e6; border-bottom-color: #e6e6e6; flex: none; position: relative; }
.ck.on::after { content: ""; position: absolute; left: 2px; top: 0; width: 5px; height: 3px; border-left: 2px solid #000; border-bottom: 2px solid #000; transform: rotate(-50deg) translate(-1px, 1px); }
.cl { margin-left: 5px; }
.b-ct { width: 43px; height: 25px; margin-left: 27px; }
.b-ct svg { width: 24px; height: 14px; }
.radios { display: flex; align-items: center; margin: 3px 0 0 14px; width: 153px; height: 25px; border: 1px solid #a6a6a6; padding-left: 12px; }
.rd { width: 11px; height: 11px; border-radius: 50%; border: 1px solid #8a8a8a; background: #fff; margin-right: 5px; flex: none; position: relative; }
.rd.on::after { content: ""; position: absolute; left: 3px; top: 3px; width: 3px; height: 3px; border-radius: 50%; background: #000; }
.rl { margin-right: 12px; }
.rl1 { margin-right: 17px; width: 36px; }
.rl2 { margin-right: 12px; }
.hatchopts { display: flex; justify-content: space-between; height: 71px; margin-top: 6px; padding: 0 11px 0 20px; }
.chkrow { height: 18px; display: flex; align-items: center; gap: 5px; white-space: nowrap; letter-spacing: -.15px; }
.typecol { width: 38px; }
.typel { display: block; height: 16px; line-height: 12px; padding-left: 11px; }
.b-type { width: 38px; height: 40px; background: #fff; }
.b-type svg { width: 30px; height: 34px; }
.anglelabels { height: 15px; display: flex; padding: 2px 0 0 22px; gap: 61px; }
.anglerow { height: 23px; display: flex; align-items: center; padding-left: 21px; }
.in-angle { width: 46px; height: 18px; }
.deg { margin-left: 7px; width: 24px; }
.combo { width: 57px; height: 22px; border: 2px solid #808080; border-right-color: #eee; border-bottom-color: #eee; display: flex; align-items: center; background: #fff; }
.pensw { width: 16px; height: 14px; background: #000; margin: 0 5px 0 3px; }
.ddarrow { width: 17px; height: 18px; margin-left: auto; }
.ddarrow svg { width: 8px; height: 4px; }
.fr { height: 22px; display: flex; align-items: center; padding-left: 10px; flex: none; }
.fl { width: 87px; }
.in-f { width: 43px; height: 18px; }
.dis { background: #f0f0f0; color: #999; }
.mm { margin-left: 5px; color: #222; }
.avg { height: 18px; display: flex; align-items: center; gap: 5px; padding-left: 11px; letter-spacing: -.2px; }
.anglerow + .fr { margin-top: 2px; }
.avg + .fr { margin-top: 2px; }

/* vertical tool strip */
.vtool { width: 36px; flex: none; height: 467px; margin-top: 9px; padding-left: 2px; border-left: 1px solid #a6a6a6; border-right: 1px solid #a6a6a6; border-bottom: 1px solid #a6a6a6; border-top: 1px solid #d8d8d8; }
.vt { width: 30px; height: 31px; display: flex; align-items: center; justify-content: center; }
.vt svg { width: 24px; height: 24px; }
.active { background: #fafafa; border: 1px solid #dcdcdc; width: 30px; height: 30px; }
.bcode { font: 5px "Liberation Sans", sans-serif; text-anchor: middle; fill: #222; }

/* center */
.center { width: 963px; flex: none; display: flex; flex-direction: column; }
.tb2 { height: 36px; display: flex; padding: 1px 0 0 7px; align-items: flex-start; gap: 2px; flex: none; }
.b2 { width: 28px; height: 32px; }
.b2 svg { width: 24px; height: 24px; }
.b2 svg.lk { width: 20px; height: 20px; }
.w30 { width: 30px; }
.w30 svg { width: 26px; height: 26px; }
.pressed2 { border-color: #696969 #fff #fff #696969; box-shadow: inset 1px 1px #a0a0a0; }
.b2gap { flex: none; }
.g7 { width: 5px; }
.g15 { width: 13px; }
.g9 { width: 7px; }
.canvas { height: 507px; flex: none; display: flex; background: #f0f0f0; position: relative; }
.draw { flex: none; }
.vhandle { position: absolute; left: 950px; top: 246px; width: 2px; height: 16px; background: #909090; }
.canvas::before { content: ""; position: absolute; left: 0; top: 0; width: 943px; height: 2px; background: #808080; z-index: 1; }
.canvas::after { content: ""; position: absolute; left: 0; top: 0; width: 1px; height: 523px; background: #808080; z-index: 1; }
.hstrip { height: 18px; flex: none; display: flex; align-items: center; border-bottom: 1px solid #c0c0c0; padding-left: 463px; }
.hhandle { width: 17px; height: 2px; background: #909090; }
.controls { flex: 1; display: flex; align-items: flex-start; padding-left: 2px; }
.dis-t { color: #a0a0a0; }
.c-red { width: 57px; height: 42px; margin-top: 10px; }
.c-mark { width: 58px; height: 42px; margin: 10px 0 0 3px; border-color: #808080 #505050 #505050 #808080; box-shadow: inset -1px -1px #707070, inset 1px 1px #d0d0d0; }
.c-checks { margin: 6px 0 0 6px; width: 95px; }
.c-checks .chkrow { height: 24px; letter-spacing: -.3px; }
.c-part { margin: 8px 0 0 -1px; width: 108px; }
.prow { height: 23px; display: flex; align-items: center; }
.pl { width: 42px; white-space: nowrap; overflow: hidden; }
.in-p { width: 43px; height: 20px; }
.b-r { width: 18px; height: 22px; margin-left: 3px; }
.b-param { width: 56px; height: 24px; margin: 33px 0 0 1px; }
.c-times { margin: 8px 0 0 3px; display: flex; flex-direction: column; gap: 4px; }
.timebox { width: 74px; height: 20px; border: 1px solid #a6a6a6; border-right-color: #fff; border-bottom-color: #fff; line-height: 18px; padding-left: 1px; }
.c2 { margin-left: 3px; }
.c2 .chkrow { letter-spacing: -.2px; }

/* right */
.right { width: 189px; flex: none; padding-top: 2px; border-left: 1px solid #a6a6a6; margin-left: 2px; }
.capr { width: 167px; margin-left: 3px; }
.penlist { margin: 21px 0 0 7px; width: 160px; height: 135px; border: 2px solid #808080; border-right-color: #f8f8f8; border-bottom-color: #f8f8f8; position: relative; background: #f0f0f0; }
.pen-head { height: 18px; display: flex; line-height: 16px; font-size: 11.500px; }
.ph1 { width: 75px; padding-left: 6px; }
.ph2 { width: 39px; padding-left: 6px; }
.ph3 { width: 26px; padding-left: 5px; }
.pen-rows { width: 141px; height: 105px; background: #fff; overflow: hidden; padding-top: 1px; }
.pen { height: 14px; display: flex; align-items: center; font-size: 11.500px; }
.star { width: 11px; height: 14px; color: #e01010; font: bold 13px/14px "DejaVu Sans", sans-serif; text-align: center; overflow: hidden; flex: none; }
.pn { width: 65px; padding-left: 4px; height: 14px; line-height: 14px; flex: none; }
.pn.sel { background: #0078d7; color: #fff; }
.sw { width: 37px; height: 12px; margin: 0 6px 0 1px; border: 1px solid #000; background: #000; flex: none; }
.s-blue { background: #00f; }
.s-red { background: #f00; }
.s-green { background: #0f0; }
.s-mag { background: #f0f; }
.s-yel { background: #ff0; }
.s-sal { background: #ff8080; }
.s-mar { background: #800000; }
.vthumb { position: absolute; left: 148px; top: 17px; width: 2px; height: 17px; background: #909090; }
.hthumb { position: absolute; left: 16px; top: 130px; width: 94px; height: 2px; background: #909090; }
.palette { display: flex; gap: 1.500px; margin: 12px 0 0 9px; }
.palette i { width: 18px; height: 20px; background: #000; flex: none; }
.palette .s-blue { background: #00f; } .palette .s-red { background: #f00; } .palette .s-green { background: #0f0; }
.palette .s-mag { background: #f0f; } .palette .s-yel { background: #ff0; } .palette .s-sal { background: #ff8080; } .palette .s-mar { background: #800000; }
.parambox { margin: 3px 0 0 6px; width: 162px; height: 310px; border: 1px solid #a6a6a6; padding-left: 2px; }
.usedef { height: 23px; display: flex; align-items: center; gap: 5px; padding: 3px 0 0 3px; letter-spacing: -.2px; }
.pr { height: 22.750px; display: flex; align-items: flex-start; }
.plab { width: 93px; height: 21px; border: 1px solid #c8c8c8; border-bottom-color: #fff; border-right-color: #fff; line-height: 19px; padding-left: 1px; white-space: nowrap; overflow: hidden; }
.pv { width: 59px; height: 21px; margin-left: 2px; background: #f0f0f0; color: #999; line-height: 17px; }
.pr:nth-of-type(2) .pv { color: #555; }
.spin { position: absolute; right: 1px; top: 1px; width: 15px; height: 15px; border: 1px solid #b4b4b4; background: linear-gradient(#f0f0f0 46%, #8c8c8c 46%, #8c8c8c 54%, #f0f0f0 54%); }
.spin::before, .spin::after { content: ""; position: absolute; left: 5px; width: 0; height: 0; border-left: 2px solid transparent; border-right: 2px solid transparent; }
.spin::before { top: 2px; border-bottom: 2px solid #808080; }
.spin::after { bottom: 2px; border-top: 2px solid #808080; }
.prgap { height: 22px; }
.advrow { display: flex; justify-content: flex-end; gap: 5px; padding-right: 3px; margin-top: 29px; }
.b-rings { width: 31px; height: 22px; }
.b-rings svg { width: 28px; height: 12px; }
.b-adv { width: 70px; height: 22px; }
.namerow { display: flex; margin: 5px 0 0 6px; height: 20px; gap: 2px; }
.b-name { width: 61px; height: 20px; white-space: nowrap; overflow: hidden; letter-spacing: -.2px; }
.nameval { width: 99px; border: 1px solid #fff; border-top-color: #dcdcdc; border-left-color: #dcdcdc; line-height: 17px; font-size: 11.500px; }
.b-wide { width: 162px; height: 26px; margin: 1px 0 0 6px; letter-spacing: -.2px; }

/* status */
.status { height: 22px; border-top: 1px solid #a6a6a6; display: flex; align-items: center; padding: 2px 0 0 2px; font-size: 11.500px; background: #f0f0f0; flex: none; }
.st-msg { width: 1084px; letter-spacing: -.1px; }
.st { height: 17px; margin-top: -1px; border: 1px solid #b4b4b4; border-right-color: #eee; border-bottom-color: #eee; line-height: 15px; padding-left: 2px; overflow: hidden; white-space: nowrap; flex: none; }
.st1 { width: 105px; padding-left: 5px; margin-right: 3px; }
.st2 { width: 55px; margin-right: 3px; }
.st3 { width: 57px; margin-right: 2px; }
.st4 { width: 56px; }

/* taskbar */
.taskbar { height: 47px; flex: none; display: flex; align-items: center; position: relative; border-top: 1px solid #c6ccd6; background: linear-gradient(90deg, #dfeaf6 0%, #d6e2f4 30%, #cfdcf3 50%, #d8e4f5 70%, #e5eff8 100%); font: 12px "Noto Sans", sans-serif; }
.tb-widget { display: flex; align-items: center; padding-left: 19px; width: 405px; flex: none; }
.coin { width: 30px; height: 30px; position: relative; }
.badge { position: absolute; left: 11px; top: -3px; width: 16px; height: 16px; border-radius: 50%; background: #b3201e; color: #fff; text-align: center; font-size: 11px; line-height: 15px; }
.wtext { display: flex; flex-direction: column; gap: 2px; margin-left: 1px; line-height: 14px; }
.wgreen { color: #1c7a2e; }
.tb-center { display: flex; align-items: center; width: 563px; flex: none; }
.ti-win { width: 22px; height: 22px; margin-left: 2px; flex: none; }
.searchbox { width: 219px; height: 32px; margin-left: 14px; border-radius: 16px; background: #eff4fc; border: 1px solid #d8e0ee; display: flex; align-items: center; padding-left: 10px; gap: 9px; color: #444; flex: none; font-size: 13px; }
.flamingo { margin-left: auto; margin-right: 6px; }
.ti { width: 24px; height: 24px; margin-left: 21px; flex: none; }
.searchbox + .ti { margin-left: 11px; }
.ti-ki { width: 24px; height: 26px; margin-left: 20px; background: #3040b8; border-radius: 5px; color: #fff; font: bold 15px "Liberation Sans", sans-serif; text-align: center; line-height: 26px; position: relative; flex: none; }
.dot { position: absolute; left: 9px; top: 29px; width: 5px; height: 3px; background: #6a7282; border-radius: 2px; }
.ti-ez { width: 38px; height: 42px; margin-left: 14px; margin-top: 4px; background: #eef3fb; border-radius: 4px; display: flex; flex-direction: column; align-items: center; padding-top: 4px; position: relative; flex: none; font: bold 7px "Liberation Sans", sans-serif; color: #333; }
.activebar { position: absolute; left: 11px; bottom: 1px; width: 16px; height: 3px; background: #0a63c8; border-radius: 2px; }
.tb-tray { display: flex; align-items: center; padding-left: 187px; flex: 1; min-width: 0; }
.tray { flex: none; }
.tr-a { margin-right: 18px; }
.tr-b { margin-right: 8px; }
.tr-c { margin-right: 8px; }
.tr-d { margin-right: 15px; }
.clock { display: flex; flex-direction: column; align-items: flex-end; gap: 2px; width: 59px; line-height: 14px; flex: none; white-space: nowrap; }
.bell { margin-left: 9px; flex: none; }

/* ruler text */
.rt text { font: 10.500px "Liberation Sans", sans-serif; text-anchor: middle; fill: #111; }
```
